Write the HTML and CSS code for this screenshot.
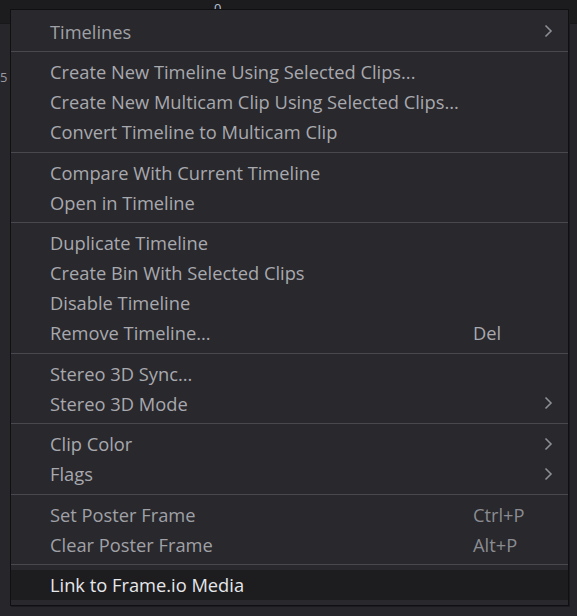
FILE: index.html
```html
<!DOCTYPE html>
<html>
<head>
<meta charset="utf-8">
<link rel="stylesheet" href="styles.css">
</head>
<body>
<div class="backdrop">
  <div class="topbar"><span class="ruler-num">0</span></div>
  <div class="panel">
    <div class="panel-row"><span class="side-num">5</span></div>
  </div>
</div>

<div class="menu">
  <div class="item"><span class="label dim">Timelines</span><span class="key"></span><span class="sub"><svg width="9" height="14" viewBox="0 0 9 14"><polyline points="1.5,1.5 7,7 1.5,12.5"/></svg></span></div>
  <div class="sep"></div>
  <div class="item"><span class="label">Create New Timeline Using Selected Clips...</span></div>
  <div class="item"><span class="label">Create New Multicam Clip Using Selected Clips...</span></div>
  <div class="item"><span class="label">Convert Timeline to Multicam Clip</span></div>
  <div class="sep"></div>
  <div class="item"><span class="label">Compare With Current Timeline</span></div>
  <div class="item"><span class="label">Open in Timeline</span></div>
  <div class="sep"></div>
  <div class="item"><span class="label">Duplicate Timeline</span></div>
  <div class="item"><span class="label">Create Bin With Selected Clips</span></div>
  <div class="item"><span class="label">Disable Timeline</span></div>
  <div class="item"><span class="label">Remove Timeline...</span><span class="key">Del</span></div>
  <div class="sep"></div>
  <div class="item"><span class="label">Stereo 3D Sync...</span></div>
  <div class="item"><span class="label">Stereo 3D Mode</span><span class="key"></span><span class="sub"><svg width="9" height="14" viewBox="0 0 9 14"><polyline points="1.5,1.5 7,7 1.5,12.5"/></svg></span></div>
  <div class="sep"></div>
  <div class="item"><span class="label">Clip Color</span><span class="key"></span><span class="sub"><svg width="9" height="14" viewBox="0 0 9 14"><polyline points="1.5,1.5 7,7 1.5,12.5"/></svg></span></div>
  <div class="item"><span class="label">Flags</span><span class="key"></span><span class="sub"><svg width="9" height="14" viewBox="0 0 9 14"><polyline points="1.5,1.5 7,7 1.5,12.5"/></svg></span></div>
  <div class="sep"></div>
  <div class="item"><span class="label dim">Set Poster Frame</span><span class="key dim">Ctrl+P</span></div>
  <div class="item"><span class="label dim">Clear Poster Frame</span><span class="key dim">Alt+P</span></div>
  <div class="sep"></div>
  <div class="item active"><span class="label">Link to Frame.io Media</span></div>
</div>
</body>
</html>
```

FILE: styles.css
```css
html, body {
  margin: 0;
  padding: 0;
  background: #27272c;
  width: 577px;
  height: 616px;
  overflow: hidden;
  font-family: "Open Sans", "Noto Sans", sans-serif;
}

.backdrop {
  display: flex;
  flex-direction: column;
  height: 616px;
}

.topbar {
  height: 23px;
  background: #1c1c1f;
  border-bottom: 1px solid #18181b;
  position: relative;
}

.ruler-num {
  position: absolute;
  left: 214px;
  top: 0;
  font-size: 13px;
  line-height: 16px;
  color: #b8c4d8;
}

.panel {
  flex: 1;
  background: #26262b;
}

.panel-row {
  height: 30px;
  margin-top: 50px;
  position: relative;
}

.side-num {
  position: absolute;
  left: 0;
  top: -6px;
  font-size: 13px;
  color: #9a9aa0;
}

.menu {
  position: absolute;
  left: 10px;
  top: 9px;
  width: 559px;
  box-sizing: border-box;
  background: #28282d;
  border: 1px solid #101012;
  padding: 6px 0 5px;
  box-shadow: 1px 1px 0 #1c1c20;
}

.item {
  display: grid;
  grid-template-columns: 423px 62px 1fr;
  align-items: center;
  height: 30px;
  padding-left: 39px;
  font-size: 18.3px;
  color: #a8a9ae;
  white-space: nowrap;
}

.item .label.dim,
.item .key.dim {
  color: #8b8c91;
}

.item .label.dim:first-child {
  color: #a0a1a6;
}

.item.active {
  background: #1d1d1f;
  color: #e6e7ea;
}

.sub {
  display: flex;
  align-items: center;
  padding-left: 9px;
}

.sub svg polyline {
  fill: none;
  stroke: #8e8f94;
  stroke-width: 1.6;
}

.sep {
  height: 1px;
  background: #48484e;
  margin: 5px 0 4.5px;
}
```
